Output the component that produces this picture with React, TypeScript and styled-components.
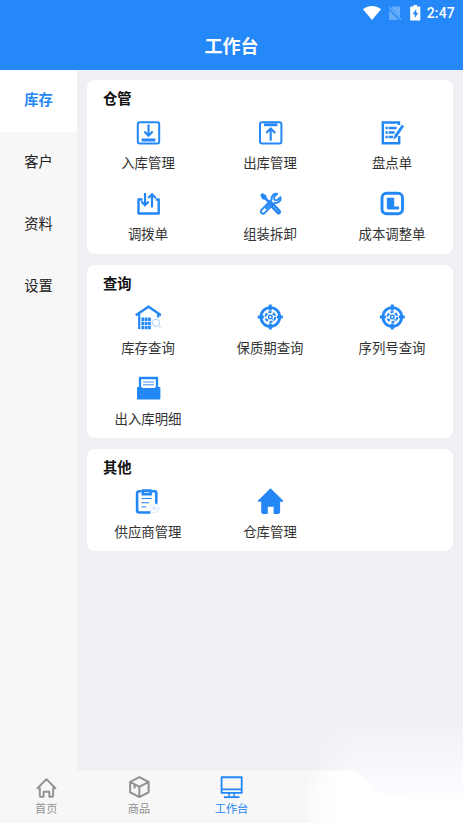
import React from 'react';
import styled, { createGlobalStyle } from 'styled-components';

const BLUE = '#2487f6';

const GlobalStyle = createGlobalStyle`
  * { box-sizing: border-box; }
  body {
    margin: 0;
    font-family: Roboto, "Noto Sans CJK SC", sans-serif;
    color: #333;
  }
`;

const Screen = styled.div`
  position: relative;
  display: flex;
  flex-direction: column;
  height: 823px;
  overflow: hidden;
  background: #efeff4;
`;

const Header = styled.header`
  flex: none;
  height: 70px;
  background: #2488f8;
  color: #fff;
`;

const StatusBar = styled.div`
  display: flex;
  justify-content: flex-end;
  align-items: center;
  height: 25px;
  padding-right: 8px;
`;

const Clock = styled.span`
  font-size: 14px;
  font-weight: 500;
  line-height: 25px;
  letter-spacing: 0.2px;
  padding-top: 1px;
`;

const PageTitle = styled.h1`
  margin: 0;
  font-size: 18px;
  font-weight: 700;
  line-height: 43px;
  text-align: center;
`;

const Main = styled.div`
  display: flex;
  flex: 1;
  min-height: 0;
`;

const Sidebar = styled.nav`
  width: 77px;
  background: #f7f7f7;
`;

const SideItem = styled.div<{ $active?: boolean }>`
  height: 62px;
  line-height: 61px;
  text-align: center;
  font-size: 14.3px;
  font-weight: ${(p) => (p.$active ? 700 : 400)};
  color: ${(p) => (p.$active ? BLUE : '#222')};
  background: ${(p) => (p.$active ? '#fff' : 'transparent')};
`;

const Content = styled.main`
  display: flex;
  flex-direction: column;
  flex: 1;
  gap: 11px;
  padding: 10px 10px 0;
`;

const Card = styled.section<{ $height: number }>`
  height: ${(p) => p.$height}px;
  background: #fff;
  border-radius: 8px;
`;

const CardTitle = styled.h2`
  margin: 0;
  padding: 8px 16px 0;
  height: 39px;
  font-size: 14.3px;
  line-height: 22px;
  font-weight: 700;
  color: #111;
`;

const Grid = styled.div`
  display: grid;
  grid-template-columns: repeat(3, 1fr);
  grid-auto-rows: 71px;
`;

const Tile = styled.div`
  display: flex;
  flex-direction: column;
  align-items: center;
  gap: 9px;
  color: ${BLUE};
`;

const TileLabel = styled.span`
  font-size: 13.4px;
  line-height: 20px;
  color: #333;
  white-space: nowrap;
`;

const TabBar = styled.footer`
  display: grid;
  grid-template-columns: repeat(5, 1fr);
  flex: none;
  height: 52px;
  background: #f7f7f7;
`;

const Tab = styled.div<{ $active?: boolean }>`
  display: flex;
  flex-direction: column;
  align-items: center;
  padding-top: 4px;
  color: ${(p) => (p.$active ? BLUE : '#929292')};
`;

const TabLabel = styled.span`
  margin-top: 2px;
  font-size: 11.2px;
  line-height: 18px;
`;

const Haze = styled.div`
  position: absolute;
  right: 0;
  bottom: 0;
  width: 160px;
  height: 108px;
  background: linear-gradient(
    to bottom,
    rgba(250, 250, 255, 0),
    rgba(250, 250, 255, 0.4) 22%,
    rgba(250, 250, 255, 0.75) 48%,
    #fbfbff 66%,
    #fff 82%
  );
  mask-image: linear-gradient(to right, transparent, #000 50px);
  pointer-events: none;
`;

const BarGlow = styled.div`
  position: absolute;
  right: 0;
  bottom: 0;
  width: 160px;
  height: 52px;
  background: linear-gradient(to right, rgba(255, 255, 255, 0), #fff 36px);
  clip-path: polygon(0 0, 50px 0, 64px 8px, 78px 24px, 100% 34px, 100% 100%, 0 100%);
  pointer-events: none;
`;

const Svg = ({ size = 26, children }: { size?: number; children: React.ReactNode }) => (
  <svg width={size} height={size} viewBox="0 0 26 26" fill="none" stroke="currentColor" strokeWidth="2">
    {children}
  </svg>
);

const InboundIcon = () => (
  <Svg>
    <rect x="2.8" y="3.3" width="21.4" height="21.2" rx="2" />
    <path d="M13.5 5.5v11M9.3 12.5l4.2 4.2 4.2-4.2" strokeWidth="2.1" />
    <path d="M6.6 21h13.8" strokeWidth="3" />
  </Svg>
);

const OutboundIcon = () => (
  <Svg>
    <rect x="3" y="3.3" width="21.4" height="21.2" rx="2" />
    <path d="M13.7 21.8V10M9.2 14l4.5-4.5 4.5 4.5" strokeWidth="2.1" />
    <path d="M7 5.8h13.4" strokeWidth="2.8" />
  </Svg>
);

const ChecklistIcon = () => (
  <Svg>
    <path d="M20 6V3.5H3.8v20.7h16.4V17" strokeWidth="2.4" />
    <path d="M6.5 9h2.3m.8 0h8M6.5 13.5h2.3m.8 0h6M6.5 18h2.3m.8 0h4.5" strokeWidth="2.5" />
    <path d="m22.8 5.7-7.4 10.9-1 3.9 3.3-2.3 7.4-11z" fill="currentColor" stroke="none" />
  </Svg>
);

const TransferIcon = () => (
  <Svg>
    <path d="M7.5 9.5h-4v14h20.2v-14h-3" strokeWidth="2.4" strokeLinejoin="round" />
    <path d="M10 2.9v12M6.3 11.5l3.7 3.7 3.7-3.7M17 17.5v-13M13.3 8 17 4.3 20.7 8" strokeWidth="2.2" />
  </Svg>
);

const ToolsIcon = () => (
  <Svg>
    <path d="m3.2 5 2-2 4 2.3.6 2.7 4.6 4.6-1.8 1.8L8 9.8l-2.7-.6z" fill="currentColor" stroke="none" />
    <path d="m16 16 5.5 5.8" strokeWidth="5.2" strokeLinecap="round" />
    <path d="m16 16 5.2 5.4" stroke="#9cc9fa" strokeWidth=".8" />
    <path
      d="M20.2 3.9c-3-.8-6.2 1.5-5.5 5.6L4 20.3c-1 2 1.1 4.2 3.3 3.1L18 12.7c3.9.7 6.4-2.4 5.5-5.6l-3.1 3.1-3-.3-.4-3z"
      strokeWidth="1.8"
      strokeLinejoin="round"
    />
    <path d="m8.5 18.8 7-7" strokeWidth="2.6" />
  </Svg>
);

const CostIcon = () => (
  <Svg>
    <rect x="3" y="3.2" width="20.5" height="20.6" rx="4.5" strokeWidth="2.9" />
    <path d="M7.8 7.8h7.4v8.6h4.9v3.2h-10.3a2 2 0 0 1-2-2z" fill="currentColor" stroke="none" />
  </Svg>
);

const WarehouseIcon = () => (
  <Svg>
    <path d="m.8 11.2 12.7-8.4 12.7 8.4" strokeWidth="2.4" />
    <path d="M4.2 10v15M23.2 10v3.5" strokeWidth="2.2" />
    <g fill="currentColor" stroke="none">
      {[13.6, 17.7, 21.8].map((y) =>
        [6.4, 9.7, 13].map((x) => <rect key={`${x}-${y}`} x={x} y={y} width="2.8" height="3.4" rx=".3" />),
      )}
    </g>
    <g stroke="#9bcafa" strokeWidth=".9">
      <circle cx="21" cy="18.8" r="3.6" />
      <path d="m23.6 21.6 2 2.4" />
    </g>
  </Svg>
);

const TargetIcon = () => (
  <Svg>
    <circle cx="13.3" cy="13" r="9.4" strokeWidth="2.8" />
    <path d="M13.3.5v6M13.3 19.5v6M.8 13h6M19.8 13h6" strokeWidth="3" />
    <circle cx="13.3" cy="13" r="4.9" strokeWidth="2" strokeDasharray="3.2 1.93" />
    <circle cx="13.3" cy="13" r="1.8" strokeWidth="1.4" />
    <path d="m9.2 9 2.4 2.4m3.4 3.3 2.4 2.4m0-8.1L15 11.4m-3.4 3.3-2.4 2.4" strokeWidth="1" />
  </Svg>
);

const DetailIcon = () => (
  <Svg>
    <path d="M5 14V3h17v11" strokeWidth="2.3" />
    <path d="M8 7h11M8 9.8h11" strokeWidth=".9" />
    <path d="M2.8 12h3.7l1 1h12l1-1h3.9c.6 0 1 .4 1 1v10.5c0 .6-.4 1-1 1H3c-.6 0-1-.4-1-1V13c0-.6.3-1 .8-1z" fill="currentColor" stroke="none" />
  </Svg>
);

const SupplierIcon = () => (
  <Svg>
    <path d="M6.5 3.3H4.2c-1.3 0-2.1.8-2.1 2v17.2c0 1.2.8 2 2.1 2h11.2M17 3.3h2.2c1.3 0 2.1.8 2.1 2v10.5" strokeWidth="2.6" />
    <path d="M7.8 2.6h7.8v3.5H7.8z" strokeWidth="2.6" />
    <path d="M6.4 10.5h10.2M6.4 14.8h7.8M6.4 19h5" strokeWidth="1.1" />
    <g stroke="#acd2fb" strokeWidth=".8">
      <circle cx="19.5" cy="20.3" r="4.3" strokeDasharray="2 1.1" />
      <circle cx="19.5" cy="20.3" r="1.5" />
    </g>
  </Svg>
);

const StoreHouseIcon = () => (
  <Svg>
    <path
      d="M13.5.3 26 12.4c.6.6.3 1.4-.5 1.4h-2.4V24c0 1.1-.6 1.9-1.7 1.9h-3.8c-.6 0-1-.4-1-1v-6.2h-5.8v6.2c0 .6-.4 1-1 1H6c-1.1 0-1.8-.8-1.8-1.9V13.8H1.6c-.8 0-1.1-.8-.5-1.4z"
      fill="currentColor"
      stroke="none"
    />
  </Svg>
);

const HomeIcon = () => (
  <Svg size={24}>
    <path
      d="M3.8 14.3 13.5 4.5l9.7 9.8h-2.5v8.1c0 .7-.4 1.1-1.1 1.1h-3v-5.3h-6.2v5.3h-3c-.7 0-1.1-.4-1.1-1.1v-8.1z"
      strokeWidth="2.1"
      strokeLinejoin="round"
    />
  </Svg>
);

const BoxIcon = () => (
  <Svg size={24}>
    <path d="m13.4 2.2 10 5.2v11.3l-10 5.2-10-5.2V7.4zM3.9 7.8l9.5 5 9.5-5M13.4 12.8v10.7M8.2 10.4v4.3" strokeWidth="2.2" strokeLinejoin="round" />
  </Svg>
);

const MonitorIcon = () => (
  <Svg size={24}>
    <path d="M2.8 2.4h21.8v17H2.8zM2.8 15.6h21.8" strokeWidth="2" strokeLinejoin="round" />
    <path d="M11 19.5v4M16.4 19.5v4" strokeWidth="1.6" />
    <path d="M5.4 24h16.8" strokeWidth="2" />
  </Svg>
);

const StatusIcons = () => (
  <svg width="64" height="18" viewBox="0 0 64 18" fill="#fff">
    <path d="M0 5.2C5.8.9 12.2.9 18 5.2L9 16z" />
    <g fill="#68adfa">
      <path d="M29.6 2.5H37V13L28.2 4zM26 6.2 35.6 16H26z" />
      <path d="m25.2 3.4.9-.9L38.5 15l-.9.9z" />
    </g>
    <path d="M48.2 2.6h2.3V1H54v1.6h2.3c.6 0 1 .4 1 1v11.8c0 .6-.4 1-1 1h-8.1c-.6 0-1-.4-1-1V3.6c0-.6.4-1 1-1z" />
    <path d="m53.2 5-3.6 5.2h2.2V14l3.5-5.2h-2.1z" fill="#2488f8" />
  </svg>
);

const sections = [
  {
    title: '仓管',
    height: 174,
    tiles: [
      { label: '入库管理', Icon: InboundIcon },
      { label: '出库管理', Icon: OutboundIcon },
      { label: '盘点单', Icon: ChecklistIcon },
      { label: '调拨单', Icon: TransferIcon },
      { label: '组装拆卸', Icon: ToolsIcon },
      { label: '成本调整单', Icon: CostIcon },
    ],
  },
  {
    title: '查询',
    height: 173,
    tiles: [
      { label: '库存查询', Icon: WarehouseIcon },
      { label: '保质期查询', Icon: TargetIcon },
      { label: '序列号查询', Icon: TargetIcon },
      { label: '出入库明细', Icon: DetailIcon },
    ],
  },
  {
    title: '其他',
    height: 102,
    tiles: [
      { label: '供应商管理', Icon: SupplierIcon },
      { label: '仓库管理', Icon: StoreHouseIcon },
    ],
  },
];

const tabs = [
  { label: '首页', Icon: HomeIcon },
  { label: '商品', Icon: BoxIcon },
  { label: '工作台', Icon: MonitorIcon, active: true },
];

export default function App() {
  return (
    <Screen>
      <GlobalStyle />
      <Header>
        <StatusBar>
          <StatusIcons />
          <Clock>2:47</Clock>
        </StatusBar>
        <PageTitle>工作台</PageTitle>
      </Header>
      <Main>
        <Sidebar>
          {['库存', '客户', '资料', '设置'].map((name, i) => (
            <SideItem key={name} $active={i === 0}>{name}</SideItem>
          ))}
        </Sidebar>
        <Content>
          {sections.map(({ title, height, tiles }) => (
            <Card key={title} $height={height}>
              <CardTitle>{title}</CardTitle>
              <Grid>
                {tiles.map(({ label, Icon }) => (
                  <Tile key={label}>
                    <Icon />
                    <TileLabel>{label}</TileLabel>
                  </Tile>
                ))}
              </Grid>
            </Card>
          ))}
        </Content>
      </Main>
      <TabBar>
        {tabs.map(({ label, Icon, active }) => (
          <Tab key={label} $active={active}>
            <Icon />
            <TabLabel>{label}</TabLabel>
          </Tab>
        ))}
      </TabBar>
      <Haze />
      <BarGlow />
    </Screen>
  );
}
